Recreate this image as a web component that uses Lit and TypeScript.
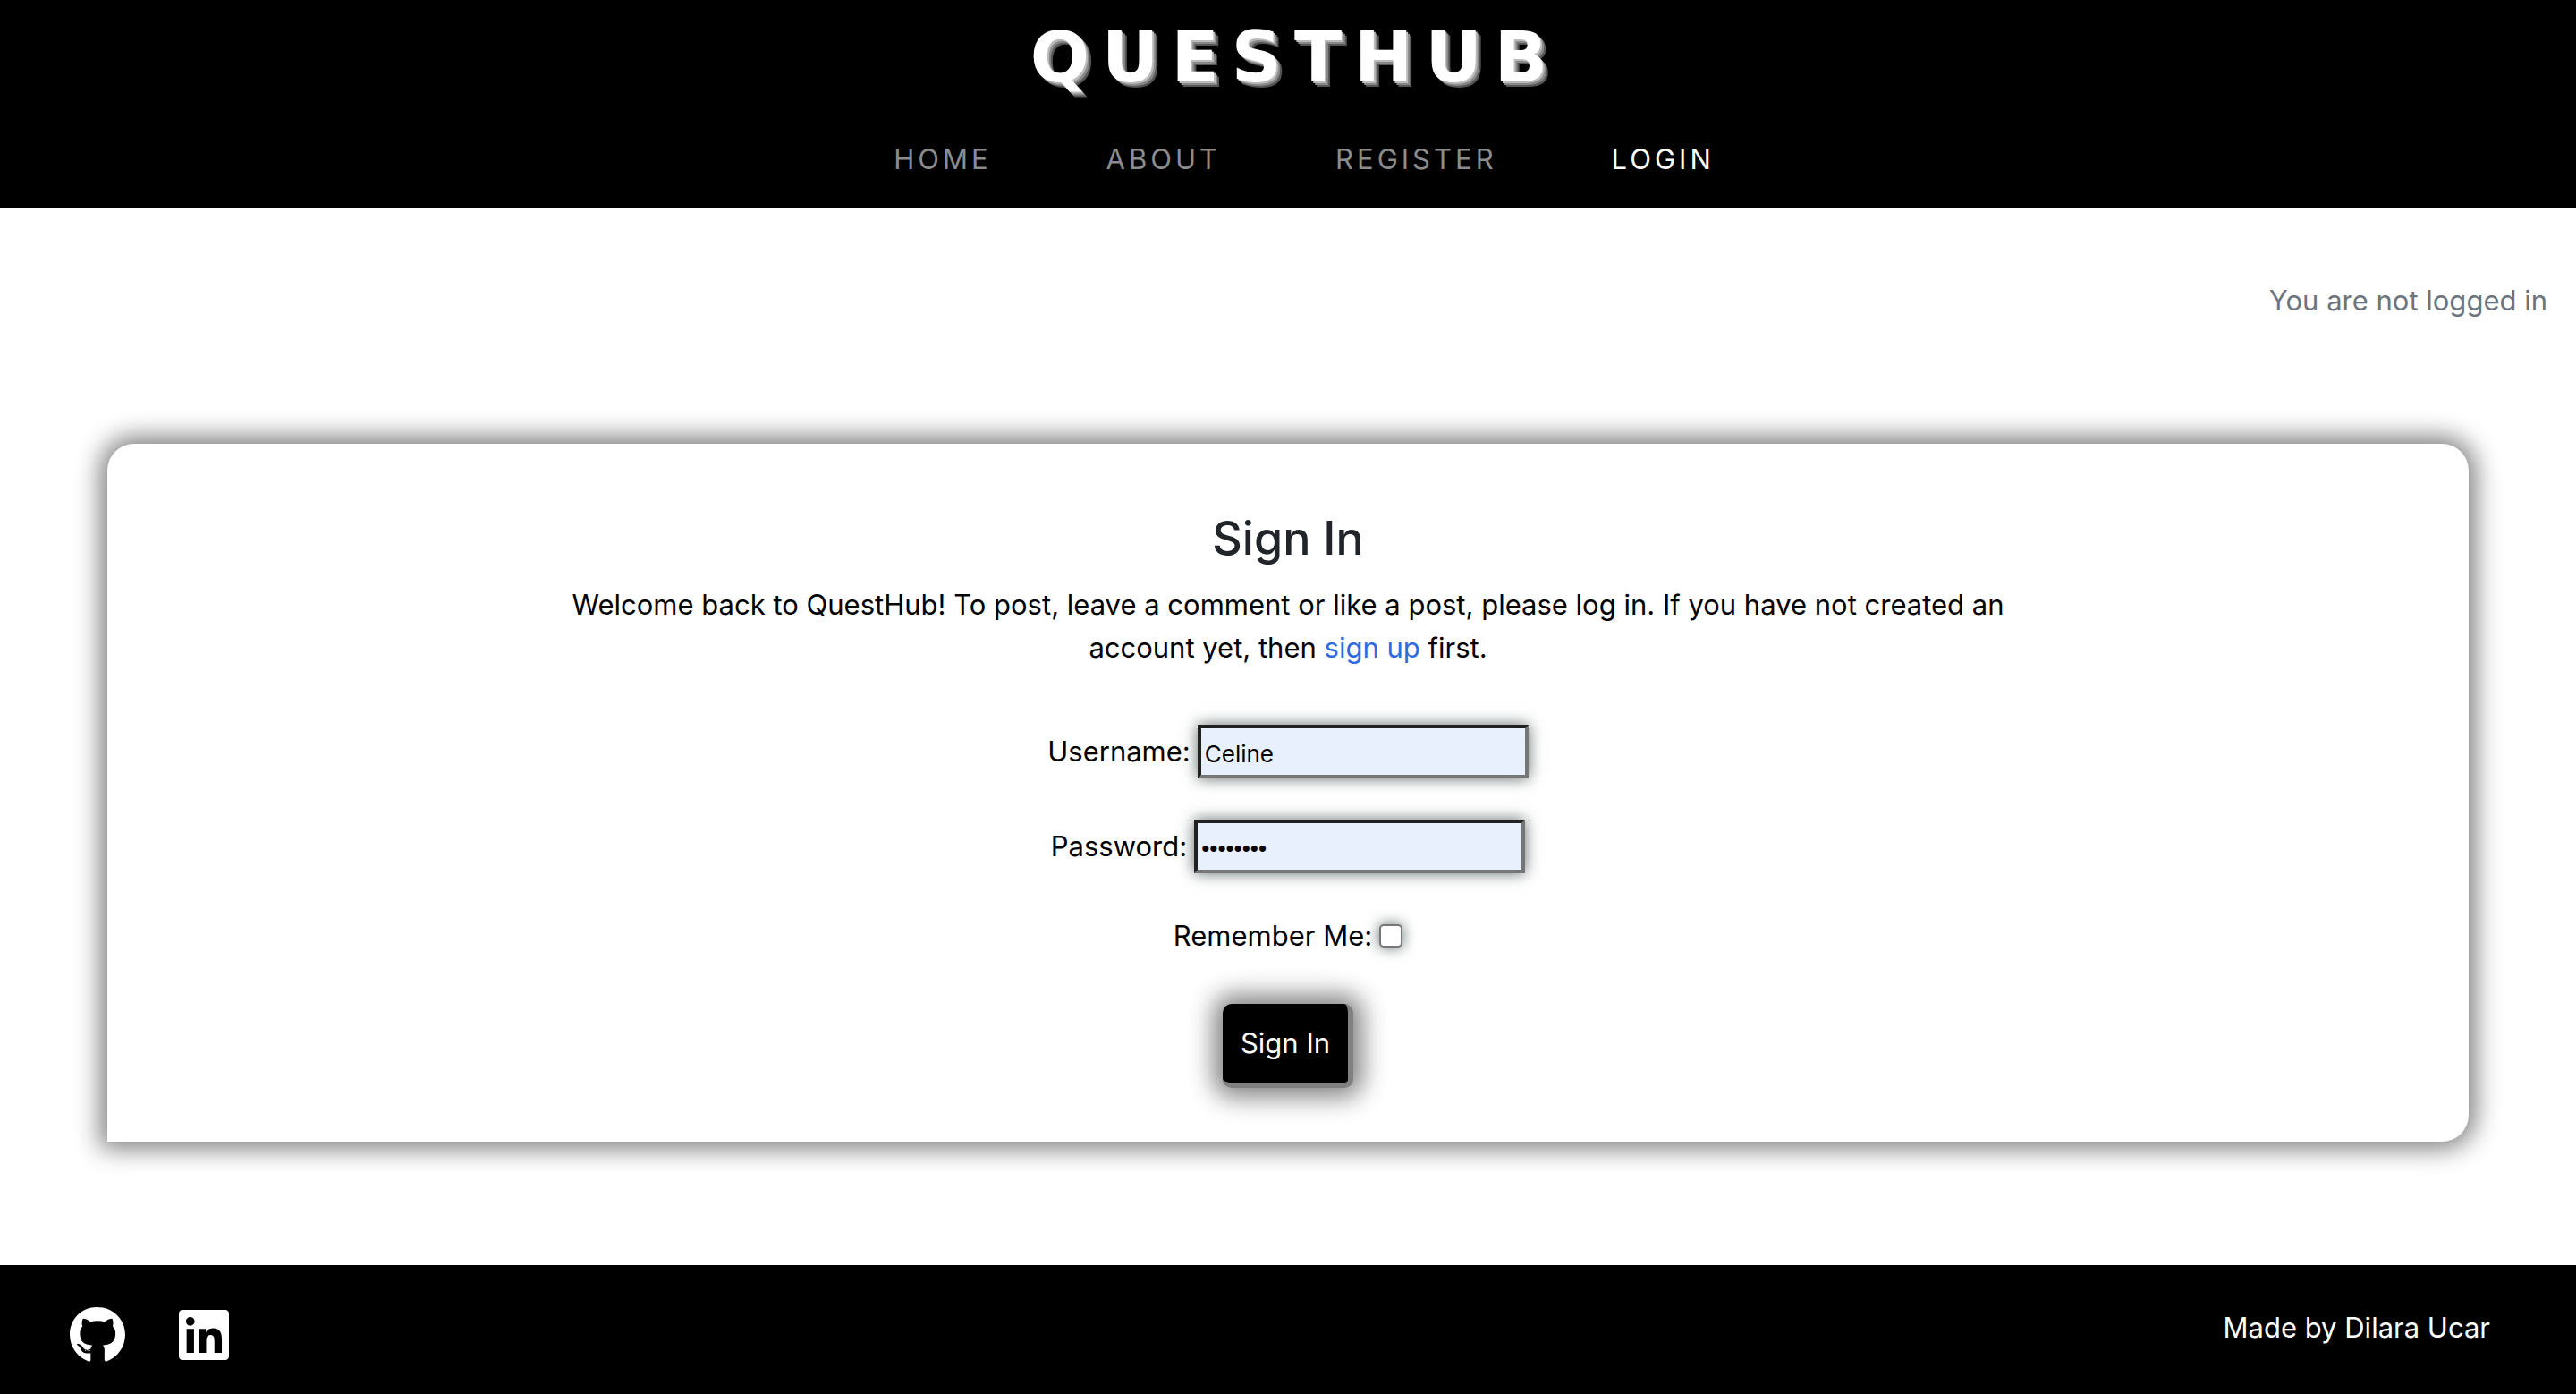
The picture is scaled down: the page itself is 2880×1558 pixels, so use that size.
import { LitElement, html, css } from "lit";
import { customElement } from "lit/decorators.js";

@customElement("app-root")
export class AppRoot extends LitElement {
  static styles = css`
    :host {
      display: flex;
      flex-direction: column;
      min-height: 100vh;
      background: #fff;
      color: #000;
      font-family: Inter, "Liberation Sans", sans-serif;
      font-size: 31px;
      line-height: 48px;
    }
    * {
      box-sizing: border-box;
    }
    a {
      color: inherit;
      text-decoration: none;
    }
    .header {
      display: flex;
      flex-direction: column;
      align-items: center;
      gap: 32px;
      padding: 16px 0 20px;
      background: #000;
      color: #fff;
    }
    .brand {
      padding-left: 16px;
      font-family: "DejaVu Sans", sans-serif;
      font-weight: 700;
      font-size: 78px;
      line-height: 96px;
      letter-spacing: 14px;
      text-shadow: 2px 2px #bbb, 4px 4px #888, 6px 6px #555;
    }
    .nav {
      display: flex;
      gap: 128px;
      padding-left: 36px;
      line-height: 68px;
      letter-spacing: 4px;
      color: #8c8c8c;
    }
    .active {
      color: #fff;
    }
    .main {
      flex: 1;
      display: flex;
      flex-direction: column;
      gap: 136px;
      padding: 80px 120px 136px;
    }
    .status {
      margin: 0 -88px 0 0;
      text-align: right;
      color: #6c757d;
    }
    .card {
      display: flex;
      flex-direction: column;
      align-items: center;
      padding: 72px 120px 60px;
      border-radius: 30px 30px 30px 0;
      box-shadow: 0 0 28px 8px #808080;
      text-align: center;
    }
    .title {
      margin: 0 0 16px;
      font-size: 52px;
      line-height: 68px;
      font-weight: 500;
      color: #212529;
    }
    .intro {
      margin: 0 0 62px;
      max-width: 1620px;
    }
    .intro a {
      color: #2f6be0;
    }
    .form {
      display: flex;
      flex-direction: column;
      align-items: center;
    }
    .field {
      display: flex;
      align-items: center;
      gap: 8px;
      margin-bottom: 46px;
    }
    .input {
      width: 370px;
      height: 60px;
      padding: 4px 4px 0;
      border: 4px solid;
      border-color: #212121 #767676 #767676 #212121;
      background: #e8f0fe;
      font: 26px Inter, "Liberation Sans", sans-serif;
      box-shadow: 0 0 16px #5f6b6b;
      outline: none;
    }
    .secret {
      font-family: "Liberation Sans", sans-serif;
    }
    .check {
      appearance: none;
      width: 26px;
      height: 26px;
      margin: 0;
      border: 2px solid #767676;
      border-radius: 5px;
      background: #fff;
      box-shadow: 0 0 16px #5f6b6b;
    }
    .submit {
      margin-top: 6px;
      padding: 20px;
      border: solid #808080;
      border-width: 0 6px 6px 0;
      border-radius: 10px;
      background: #000;
      color: #fff;
      font: inherit;
      box-shadow: 0 0 28px 10px #808080;
    }
    .footer {
      display: flex;
      justify-content: space-between;
      padding: 46px 96px 34px 78px;
      background: #000;
      color: #fff;
    }
    .social {
      display: flex;
      align-items: center;
      gap: 60px;
    }
    .social a {
      display: flex;
    }
    .icon {
      display: block;
      height: 64px;
      fill: #fff;
    }
    .credit {
      margin: 0;
    }
  `;

  render() {
    return html`
      <header class="header">
        <a class="brand" href="#">QUESTHUB</a>
        <nav class="nav">
          <a href="#">HOME</a>
          <a href="#">ABOUT</a>
          <a href="#">REGISTER</a>
          <a class="active" href="#" aria-current="page">LOGIN</a>
        </nav>
      </header>
      <main class="main">
        <p class="status">You are not logged in</p>
        <section class="card">
          <h1 class="title">Sign In</h1>
          <p class="intro">
            Welcome back to QuestHub! To post, leave a comment or like a post,
            please log in. If you have not created an account yet, then
            <a href="#">sign up</a> first.
          </p>
          <form class="form" @submit=${(e: Event) => e.preventDefault()}>
            <div class="field">
              <label for="username">Username:</label>
              <input class="input" id="username" type="text" value="Celine" />
            </div>
            <div class="field">
              <label for="password">Password:</label>
              <input class="input secret" id="password" type="password" value="12345678" />
            </div>
            <div class="field">
              <label for="remember">Remember Me:</label>
              <input class="check" id="remember" type="checkbox" />
            </div>
            <button class="submit" type="submit">Sign In</button>
          </form>
        </section>
      </main>
      <footer class="footer">
        <div class="social">
          <a href="#" aria-label="GitHub">
            <svg class="icon" viewBox="0 0 496 512">
              <path d="M165.9 397.4c0 2-2.3 3.6-5.2 3.6-3.3.3-5.6-1.3-5.6-3.6 0-2 2.3-3.6 5.2-3.6 3-.3 5.6 1.3 5.6 3.6zm-31.1-4.5c-.7 2 1.3 4.3 4.3 4.9 2.6 1 5.6 0 6.2-2s-1.3-4.3-4.3-5.2c-2.6-.7-5.5.3-6.2 2.3zm44.2-1.7c-2.9.7-4.9 2.6-4.6 4.9.3 2 2.9 3.3 5.9 2.6 2.9-.7 4.9-2.6 4.6-4.6-.3-1.9-3-3.2-5.9-2.9zM244.8 8C106.1 8 0 113.3 0 252c0 110.9 69.8 205.8 169.5 239.2 12.8 2.3 17.3-5.6 17.3-12.1 0-6.2-.3-40.4-.3-61.4 0 0-70 15-84.7-29.8 0 0-11.4-29.1-27.8-36.6 0 0-22.9-15.7 1.6-15.4 0 0 24.9 2 38.6 25.8 21.9 38.6 58.6 27.5 72.9 20.9 2.3-16 8.8-27.1 16-33.7-55.9-6.2-112.3-14.3-112.3-110.5 0-27.5 7.6-41.3 23.6-58.9-2.6-6.5-11.1-33.3 2.6-67.9 20.9-6.5 69 27 69 27 20-5.6 41.5-8.5 62.8-8.5s42.8 2.9 62.8 8.5c0 0 48.1-33.6 69-27 13.7 34.7 5.2 61.4 2.6 67.9 16 17.7 25.8 31.5 25.8 58.9 0 96.5-58.9 104.2-114.8 110.5 9.2 7.9 17 22.9 17 46.4 0 33.7-.3 75.4-.3 83.6 0 6.5 4.6 14.4 17.3 12.1C428.2 457.8 496 362.9 496 252 496 113.3 383.5 8 244.8 8z" />
            </svg>
          </a>
          <a href="#" aria-label="LinkedIn">
            <svg class="icon" viewBox="0 0 448 512">
              <path d="M416 32H31.9C14.3 32 0 46.5 0 64.3v383.4C0 465.5 14.3 480 31.9 480H416c17.6 0 32-14.5 32-32.3V64.3c0-17.8-14.4-32.3-32-32.3zM135.4 416H69V202.2h66.5V416zm-33.2-243c-21.3 0-38.5-17.3-38.5-38.5S80.9 96 102.2 96c21.2 0 38.5 17.3 38.5 38.5 0 21.3-17.2 38.5-38.5 38.5zm282.1 243h-66.4V312c0-24.8-.5-56.7-34.5-56.7-34.6 0-39.9 27-39.9 54.9V416h-66.4V202.2h63.7v29.2h.9c8.9-16.8 30.6-34.5 62.9-34.5 67.2 0 79.7 44.3 79.7 101.9V416z" />
            </svg>
          </a>
        </div>
        <p class="credit">Made by Dilara Ucar</p>
      </footer>
    `;
  }
}
